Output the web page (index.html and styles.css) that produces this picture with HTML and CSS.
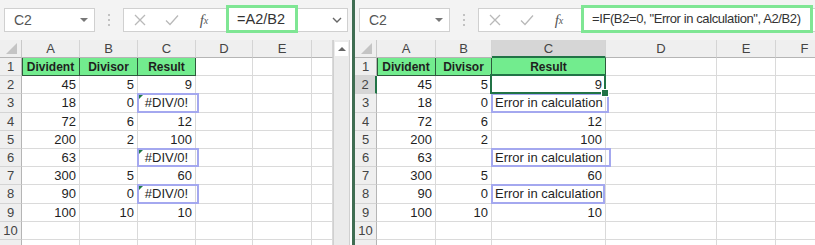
FILE: index.html
```html
<!DOCTYPE html>
<html lang="en">
<head>
    <meta charset="UTF-8">
    <title>IF divide by zero</title>
    <link rel="stylesheet" href="styles.css">
</head>
<body>
<div class="app">

    <!-- Left window: plain division -->
    <section class="pane pane-left">
        <div class="toolbar">
            <div class="namebox">C2<span class="caret"></span></div>
            <div class="grip"><i></i><i></i><i></i></div>
            <div class="fbar">
                <span class="fbtn"><svg width="12" height="12" viewBox="0 0 12 12"><path d="M1 1L11 11M11 1L1 11" stroke="#b9b9b9" stroke-width="1.3" fill="none"/></svg></span>
                <span class="fbtn"><svg width="14" height="12" viewBox="0 0 14 12"><path d="M1 6.5L5 10.5L13 1.5" stroke="#b9b9b9" stroke-width="1.3" fill="none"/></svg></span>
                <span class="fbtn fx"><i>f</i><sub>x</sub></span>
                <div class="formula formula-short">=A2/B2</div>
                <span class="expand"><svg width="10" height="6" viewBox="0 0 10 6"><path d="M1 1L5 5L9 1" stroke="#666" stroke-width="1.4" fill="none"/></svg></span>
            </div>
        </div>
        <div class="sheet-wrap">
            <div class="sheet sheet-left">
                <div class="corner"><span></span></div><div class="ch">A</div><div class="ch">B</div><div class="ch">C</div><div class="ch">D</div><div class="ch">E</div><div class="ch"></div>

                <div class="h">1</div><div class="c g">Divident</div><div class="c g">Divisor</div><div class="c g">Result</div><div class="c"></div><div class="c"></div><div class="c"></div>
                <div class="h">2</div><div class="c r">45</div><div class="c r">5</div><div class="c r">9</div><div class="c"></div><div class="c"></div><div class="c"></div>
                <div class="h">3</div><div class="c r">18</div><div class="c r">0</div><div class="c ctr err box">#DIV/0!</div><div class="c"></div><div class="c"></div><div class="c"></div>
                <div class="h">4</div><div class="c r">72</div><div class="c r">6</div><div class="c r">12</div><div class="c"></div><div class="c"></div><div class="c"></div>
                <div class="h">5</div><div class="c r">200</div><div class="c r">2</div><div class="c r">100</div><div class="c"></div><div class="c"></div><div class="c"></div>
                <div class="h">6</div><div class="c r">63</div><div class="c r"></div><div class="c ctr err box">#DIV/0!</div><div class="c"></div><div class="c"></div><div class="c"></div>
                <div class="h">7</div><div class="c r">300</div><div class="c r">5</div><div class="c r">60</div><div class="c"></div><div class="c"></div><div class="c"></div>
                <div class="h">8</div><div class="c r">90</div><div class="c r">0</div><div class="c ctr err box">#DIV/0!</div><div class="c"></div><div class="c"></div><div class="c"></div>
                <div class="h">9</div><div class="c r">100</div><div class="c r">10</div><div class="c r">10</div><div class="c"></div><div class="c"></div><div class="c"></div>
                <div class="h">10</div><div class="c"></div><div class="c"></div><div class="c"></div><div class="c"></div><div class="c"></div><div class="c"></div>
                <div class="h"></div><div class="c"></div><div class="c"></div><div class="c"></div><div class="c"></div><div class="c"></div><div class="c"></div>
            </div>
            <div class="vscroll"><span class="up"></span></div>
        </div>
    </section>

    <div class="split"></div>

    <!-- Right window: IF guard -->
    <section class="pane pane-right">
        <div class="toolbar">
            <div class="namebox">C2<span class="caret"></span></div>
            <div class="grip"><i></i><i></i><i></i></div>
            <div class="fbar fbar-open">
                <span class="fbtn"><svg width="12" height="12" viewBox="0 0 12 12"><path d="M1 1L11 11M11 1L1 11" stroke="#b9b9b9" stroke-width="1.3" fill="none"/></svg></span>
                <span class="fbtn"><svg width="14" height="12" viewBox="0 0 14 12"><path d="M1 6.5L5 10.5L13 1.5" stroke="#b9b9b9" stroke-width="1.3" fill="none"/></svg></span>
                <span class="fbtn fx"><i>f</i><sub>x</sub></span>
                <div class="formula formula-long">=IF(B2=0, "Error in calculation", A2/B2)</div>
            </div>
        </div>
        <div class="sheet-wrap">
            <div class="sheet sheet-right">
                <div class="corner"><span></span></div><div class="ch">A</div><div class="ch">B</div><div class="ch ch-sel">C</div><div class="ch">D</div><div class="ch">E</div><div class="ch">F</div>

                <div class="h">1</div><div class="c g">Divident</div><div class="c g">Divisor</div><div class="c g">Result</div><div class="c"></div><div class="c"></div><div class="c"></div>
                <div class="h h-sel">2</div><div class="c r">45</div><div class="c r">5</div><div class="c r sel">9</div><div class="c"></div><div class="c"></div><div class="c"></div>
                <div class="h">3</div><div class="c r">18</div><div class="c r">0</div><div class="c box">Error in calculation</div><div class="c"></div><div class="c"></div><div class="c"></div>
                <div class="h">4</div><div class="c r">72</div><div class="c r">6</div><div class="c r">12</div><div class="c"></div><div class="c"></div><div class="c"></div>
                <div class="h">5</div><div class="c r">200</div><div class="c r">2</div><div class="c r">100</div><div class="c"></div><div class="c"></div><div class="c"></div>
                <div class="h">6</div><div class="c r">63</div><div class="c r"></div><div class="c box box-wide">Error in calculation</div><div class="c"></div><div class="c"></div><div class="c"></div>
                <div class="h">7</div><div class="c r">300</div><div class="c r">5</div><div class="c r">60</div><div class="c"></div><div class="c"></div><div class="c"></div>
                <div class="h">8</div><div class="c r">90</div><div class="c r">0</div><div class="c box box-tight">Error in calculation</div><div class="c"></div><div class="c"></div><div class="c"></div>
                <div class="h">9</div><div class="c r">100</div><div class="c r">10</div><div class="c r">10</div><div class="c"></div><div class="c"></div><div class="c"></div>
                <div class="h">10</div><div class="c"></div><div class="c"></div><div class="c"></div><div class="c"></div><div class="c"></div><div class="c"></div>
                <div class="h"></div><div class="c"></div><div class="c"></div><div class="c"></div><div class="c"></div><div class="c"></div><div class="c"></div>
            </div>
        </div>
    </section>

</div>
</body>
</html>
```

FILE: styles.css
```css
* {
    box-sizing: border-box;
}
body {
    margin: 0;
    background: #f3f3f3;
    font-family: "Liberation Sans", Arial, sans-serif;
    color: #1f1f1f;
}
.app {
    display: flex;
    width: 815px;
    height: 245px;
    overflow: hidden;
}
.pane {
    display: flex;
    flex-direction: column;
    overflow: hidden;
}
.pane-left {
    width: 352px;
    flex: none;
}
.pane-right {
    flex: 1;
    min-width: 0;
}
.split {
    width: 3px;
    flex: none;
    background: #3f6d52;
}

/* toolbar: name box + formula bar */
.toolbar {
    height: 40px;
    flex: none;
    display: flex;
    align-items: flex-start;
    padding: 8px 4px 0 4px;
}
.pane-right .toolbar {
    padding-right: 0;
}
.namebox {
    width: 91px;
    height: 24px;
    flex: none;
    background: #fff;
    border: 1px solid #d0d0d0;
    display: flex;
    align-items: center;
    justify-content: space-between;
    padding: 0 6px 0 9px;
    font-size: 14px;
    color: #555;
}
.caret {
    border-left: 4px solid transparent;
    border-right: 4px solid transparent;
    border-top: 4px solid #777;
}
.grip {
    width: 28px;
    height: 24px;
    flex: none;
    display: flex;
    flex-direction: column;
    align-items: center;
    justify-content: center;
    gap: 3px;
}
.grip i {
    width: 2px;
    height: 2px;
    background: #c2c2c2;
}
.fbar {
    flex: 1;
    height: 24px;
    background: #fff;
    border: 1px solid #d0d0d0;
    display: flex;
    align-items: center;
}
.fbar-open {
    margin-right: -20px;
}
.fbtn {
    width: 32px;
    flex: none;
    display: flex;
    justify-content: center;
    align-items: center;
}
.fx {
    font-family: "Liberation Serif", serif;
    font-size: 15px;
    color: #555;
}
.fx sub {
    font-size: 10px;
    font-style: italic;
    vertical-align: -2px;
}
.formula {
    align-self: flex-start;
    margin: -4px 0 0 6px;
    height: 28px;
    flex: none;
    border: 3px solid #7fe694;
    background: #fff;
    padding: 0 0 0 8px;
    font-size: 14.5px;
    line-height: 22px;
    color: #333;
    white-space: nowrap;
    overflow: hidden;
}
.formula-short {
    width: 72px;
}
.formula-long {
    width: 232px;
    font-size: 13px;
    letter-spacing: -0.4px;
}
.expand {
    margin-left: auto;
    margin-right: 5px;
    display: flex;
}

/* worksheet grid */
.sheet-wrap {
    flex: 1;
    display: flex;
    overflow: hidden;
    background: #fff;
}
.sheet {
    display: grid;
    grid-template-rows: 18px repeat(11, 18.2px);
    flex: none;
}
.sheet-left {
    grid-template-columns: 22px 58px 58px 58px 57px 59px 21px;
}
.sheet-right {
    grid-template-columns: 22px 59px 56px 114px 111px 59px 58px;
}
.corner, .ch, .h {
    background: #efefef;
    color: #444;
    font-size: 13px;
    text-align: center;
}
.corner {
    border-right: 1px solid #c9c9c9;
    border-bottom: 1px solid #b5b5b5;
    display: flex;
    justify-content: flex-end;
    align-items: flex-end;
    padding: 0 4px 3px 0;
}
.corner span {
    border-left: 11px solid transparent;
    border-bottom: 11px solid #c4c4c4;
}
.ch {
    border-right: 1px solid #d4d4d4;
    border-bottom: 1px solid #b5b5b5;
    line-height: 17px;
}
.ch-sel {
    background: #d6d6d6;
    border-bottom: 2px solid #217346;
}
.h {
    border-right: 1px solid #b5b5b5;
    border-bottom: 1px solid #d4d4d4;
    line-height: 18px;
}
.h-sel {
    background: #d6d6d6;
    border-right: 2px solid #217346;
}
.c {
    position: relative;
    border-right: 1px solid #dadada;
    border-bottom: 1px solid #dadada;
    padding: 0 3px;
    font-size: 13px;
    line-height: 18px;
    white-space: nowrap;
}
.r {
    text-align: right;
}
.ctr {
    text-align: center;
}
.g {
    background: #72ec8e;
    font-weight: bold;
    font-size: 12px;
    text-align: center;
    border-right-color: #2d5a3c;
    border-bottom-color: #2d5a3c;
}
.h + .g {
    box-shadow: inset 1px 0 0 #2d5a3c;
}

/* error indicator and annotation boxes */
.err::before {
    content: "";
    position: absolute;
    left: 1px;
    top: 1px;
    border-top: 4px solid #1f7a44;
    border-right: 4px solid transparent;
}
.box {
    z-index: 2;
}
.box::after {
    content: "";
    position: absolute;
    left: -1px;
    top: -1px;
    right: -4px;
    bottom: -1px;
    border: 2px solid #a4a8ef;
}
.box-wide::after {
    right: -6px;
}
.box-tight::after {
    right: 0;
}
.sel {
    z-index: 3;
}
.sel::after {
    content: "";
    position: absolute;
    left: -2px;
    top: -2px;
    right: -1px;
    bottom: -1px;
    border: 2px solid #217346;
}
.sel::before {
    content: "";
    position: absolute;
    right: -4px;
    bottom: -4px;
    width: 6px;
    height: 6px;
    background: #217346;
    border: 1px solid #fff;
    z-index: 1;
}

.vscroll {
    width: 17px;
    flex: none;
    background: #ebebeb;
    border-left: 1px solid #d0d0d0;
    border-right: 1px solid #d0d0d0;
    padding: 2px 1px 0;
}
.up {
    display: flex;
    justify-content: center;
    align-items: center;
    height: 14px;
    background: #fff;
}
.up::before {
    content: "";
    border-left: 4px solid transparent;
    border-right: 4px solid transparent;
    border-bottom: 4px solid #666;
}
```
